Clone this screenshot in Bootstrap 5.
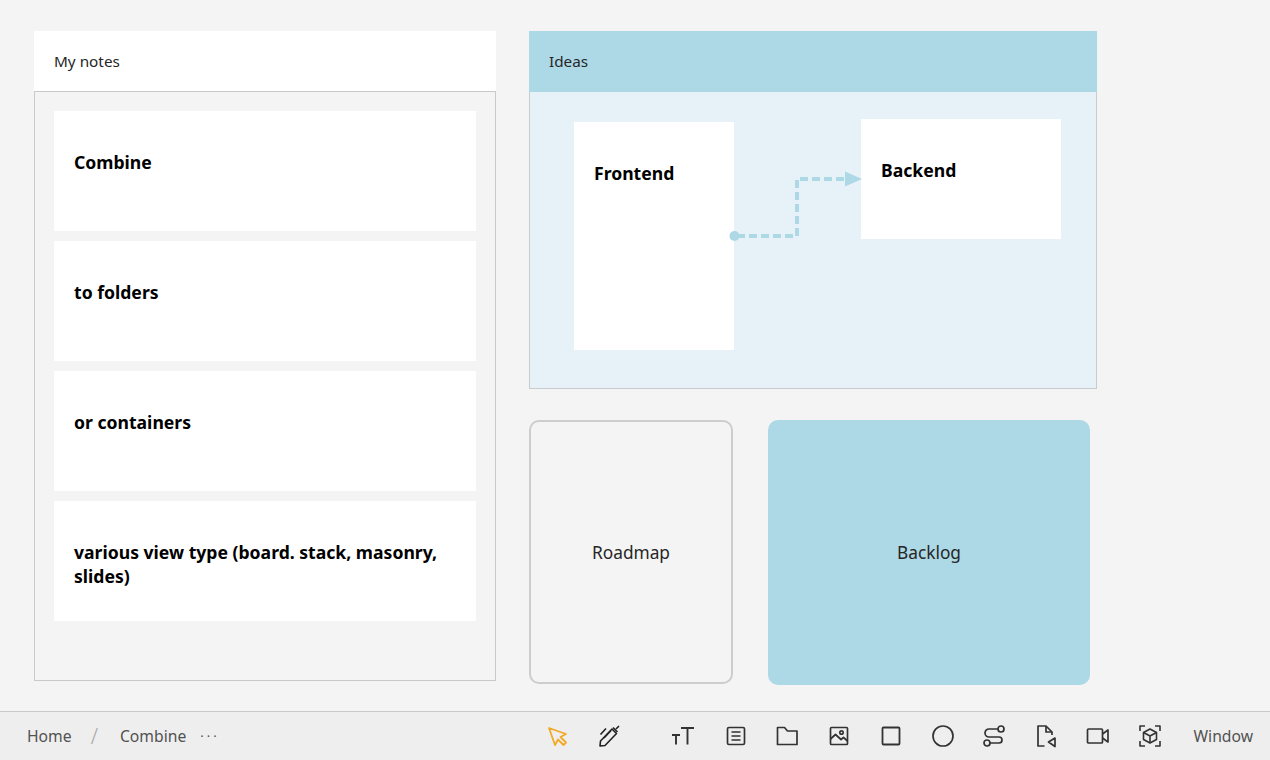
<!DOCTYPE html>
<html lang="en">
<head>
<meta charset="utf-8">
<title>Combine</title>
<link href="https://cdn.jsdelivr.net/npm/bootstrap@5.3.0/dist/css/bootstrap.min.css" rel="stylesheet">
<style>
html,body{height:100%;}
body{background:#f4f4f4;font-family:"Noto Sans","Open Sans",sans-serif;color:#161616;overflow:hidden;}
.app-shell{height:760px;}
.board{position:relative;}
.win{position:absolute;}
.win-notes{left:34px;top:31px;width:462px;height:650px;}
.win-ideas{left:529px;top:31px;width:568px;height:358px;}
.win-head{height:60px;padding-left:20px;font-size:15.300px;color:#262626;}
.notes-head{background:#fff;}
.notes-body{border:1px solid #c9c9c9;padding:19px;height:590px;}
.ideas-head{background:#add8e6;height:61px;}
.ideas-body{position:relative;background:#e7f2f8;border:1px solid #c6ccd0;border-top:0;height:297px;}
.note{background:#fff;height:120px;padding:39px 20px 0;margin-bottom:10px;font-weight:700;font-size:17.600px;line-height:24px;color:#000;}
.mini{position:absolute;background:#fff;padding:39px 20px 0;font-weight:700;font-size:17.600px;line-height:24px;color:#000;}
.mini-front{left:44px;top:30px;width:160px;height:228px;}
.mini-back{left:331px;top:27px;width:200px;height:120px;}
.link-svg{position:absolute;left:197px;top:72px;}
.tile{position:absolute;top:420px;border-radius:10px;font-size:17.300px;color:#262626;}
.tile-road{left:529px;width:204px;height:264px;border:2px solid #cdcdcd;padding-top:1px;}
.tile-log{left:768px;width:322px;height:265px;background:#add8e6;}
.toolbar{height:49px;background:#eee;border-top:1px solid #c9c9c9;font-size:15.700px;color:#525252;}
.crumbs{padding-left:27px;padding-top:1px;}
.crumb-sep{color:#a8a8a8;margin:0 22px 0 19px;font-size:21px;font-weight:300;line-height:1;}
.crumb-more{margin-left:14px;font-size:13px;letter-spacing:3px;}
.tools{position:absolute;left:546px;right:17px;top:0;bottom:0;}
.tool-ico{display:block;flex:none;}
.tool-name{margin-left:auto;padding-top:1px;}
.toolbar-wrap{position:relative;}
.gap-pen{margin-left:27px;}.gap-text{margin-left:49.500px;}.gap-doc{margin-left:29px;}.gap-n{margin-left:27.800px;}
</style>
</head>
<body>
<div class="app-shell d-flex flex-column">
  <div class="board flex-grow-1">
    <section class="win win-notes">
      <div class="win-head notes-head d-flex align-items-center">My notes</div>
      <div class="notes-body">
        <div class="note">Combine</div>
        <div class="note">to folders</div>
        <div class="note">or containers</div>
        <div class="note">various view type (board. stack, masonry, slides)</div>
      </div>
    </section>
    <section class="win win-ideas">
      <div class="win-head ideas-head d-flex align-items-center">Ideas</div>
      <div class="ideas-body">
        <div class="mini mini-front">Frontend</div>
        <div class="mini mini-back">Backend</div>
        <svg class="link-svg" width="140" height="80" viewBox="0 0 140 80" fill="none">
          <path d="M10 72H70V15H120" stroke="#add8e6" stroke-width="4" stroke-dasharray="8 4"/>
          <circle cx="7.500" cy="72" r="5" fill="#add8e6"/>
          <path d="M118 7.500L135 15L118 22.500Z" fill="#add8e6"/>
        </svg>
      </div>
    </section>
    <div class="tile tile-road d-flex align-items-center justify-content-center">Roadmap</div>
    <div class="tile tile-log d-flex align-items-center justify-content-center">Backlog</div>
  </div>
  <div class="toolbar toolbar-wrap d-flex align-items-center">
    <div class="crumbs d-flex align-items-center"><span>Home</span><span class="crumb-sep">/</span><span>Combine</span><span class="crumb-more">···</span></div>
    <div class="tools d-flex align-items-center">
      <svg class="tool-ico" width="24" height="24" viewBox="0 0 24 24" fill="none" stroke="#f2a926" stroke-width="1.800" stroke-linejoin="round"><path d="M3 4L20 10L14.500 13L20 18.500L17.500 21L12 15.500L9 21Z"/></svg>
      <svg class="tool-ico gap-pen" width="24" height="24" viewBox="0 0 24 24" fill="none" stroke="#222" stroke-width="1.600" stroke-linejoin="round"><path d="M3 22L3.500 17L15 5L19.500 9.500L8 21.500Z"/><path d="M7 14L14 6.500M9 4.500L3.500 10.500M16 3.500L20.500 8M19 5L22 2"/></svg>
      <svg class="tool-ico gap-text" width="24" height="24" viewBox="0 0 24 24" fill="none" stroke="#333" stroke-width="1.900"><path d="M10 4H23M16.500 4V20.500M1 11H9M5 11V20.500"/></svg>
      <svg class="tool-ico gap-doc" width="24" height="24" viewBox="0 0 24 24" fill="none" stroke="#333" stroke-width="1.700"><rect x="3.500" y="3.500" width="17" height="17" rx="1.500"/><path d="M7.500 8H16.500M7.500 12H16.500M7.500 16H16.500"/></svg>
      <svg class="tool-ico gap-n" width="24" height="24" viewBox="0 0 24 24" fill="none" stroke="#333" stroke-width="1.700" stroke-linejoin="round"><path d="M2.500 3.500H9.500L12.500 7H22V20.500H2.500Z"/></svg>
      <svg class="tool-ico gap-n" width="24" height="24" viewBox="0 0 24 24" fill="none" stroke="#333" stroke-width="1.700" stroke-linejoin="round"><rect x="3.500" y="3.500" width="17" height="17" rx="1"/><path d="M3.500 15L8.500 10.500L14 15.500L16.500 13.500L20.500 17"/><circle cx="14.500" cy="8.500" r="1.700"/></svg>
      <svg class="tool-ico gap-n" width="24" height="24" viewBox="0 0 24 24" fill="none" stroke="#333" stroke-width="1.800"><rect x="3.500" y="3.500" width="17" height="17" rx="1"/></svg>
      <svg class="tool-ico gap-n" width="24" height="24" viewBox="0 0 24 24" fill="none" stroke="#333" stroke-width="1.700"><circle cx="12" cy="12" r="10"/></svg>
      <svg class="tool-ico gap-n" width="24" height="24" viewBox="0 0 24 24" fill="none" stroke="#333" stroke-width="1.700"><circle cx="19" cy="5" r="3"/><circle cx="5" cy="19" r="3"/><path d="M16 5H7A4 4 0 0 0 7 13H17A3 3 0 0 1 17 19H8"/></svg>
      <svg class="tool-ico gap-n" width="24" height="24" viewBox="0 0 24 24" fill="none" stroke="#333" stroke-width="1.700" stroke-linejoin="round"><path d="M10.500 22H4V2H12L18 8V11"/><path d="M12 2V8H18"/><path d="M21 14L14.500 18L21 22.500Z"/></svg>
      <svg class="tool-ico gap-n" width="24" height="24" viewBox="0 0 24 24" fill="none" stroke="#333" stroke-width="1.700" stroke-linejoin="round"><rect x="1.500" y="5" width="15" height="14" rx="1"/><path d="M16.500 10L22 6V18L16.500 14"/></svg>
      <svg class="tool-ico gap-n" width="24" height="24" viewBox="0 0 24 24" fill="none" stroke="#333" stroke-width="1.600" stroke-linejoin="round"><path d="M2 7V2H7M17 2H22V7M2 17V22H7M17 22H22V17"/><path d="M12 5L18.500 8.500V15.500L12 19L5.500 15.500V8.500Z"/><path d="M5.500 8.500L12 12L18.500 8.500M12 12V19"/></svg>
      <span class="tool-name">Window</span>
    </div>
  </div>
</div>
<script src="https://cdn.jsdelivr.net/npm/bootstrap@5.3.0/dist/js/bootstrap.bundle.min.js"></script>
</body>
</html>
